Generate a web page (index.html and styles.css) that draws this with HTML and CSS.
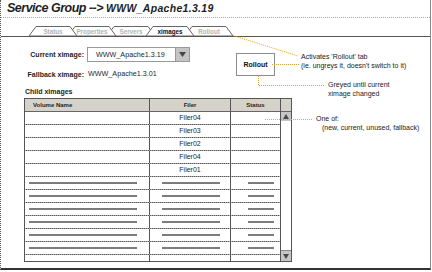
FILE: index.html
```html
<!DOCTYPE html>
<html lang="en">
<head>
  <meta charset="UTF-8" />
  <title>Service Group - ximages</title>
  <link rel="stylesheet" href="styles.css">
</head>
<body>

  <div class="frame">
    <div class="title">Service Group --&gt; <span class="title-name">WWW_Apache1.3.19</span></div>

    <div class="tabs">
      <div class="tab t1">
        <svg class="tab-shape" width="48" height="10" viewBox="0 0 48 10"><polygon points="0,10 7,0.5 41,0.5 48,10" /></svg>
        <span>Status</span>
      </div>
      <div class="tab t2">
        <svg class="tab-shape" width="48" height="10" viewBox="0 0 48 10"><polygon points="0,10 7,0.5 41,0.5 48,10" /></svg>
        <span>Properties</span>
      </div>
      <div class="tab t3">
        <svg class="tab-shape" width="48" height="10" viewBox="0 0 48 10"><polygon points="0,10 7,0.5 41,0.5 48,10" /></svg>
        <span>Servers</span>
      </div>
      <div class="tab t4 active">
        <svg class="tab-shape" width="48" height="10" viewBox="0 0 48 10"><polygon points="0,10 7,0.5 41,0.5 48,10" /></svg>
        <span>ximages</span>
      </div>
      <div class="tab t5">
        <svg class="tab-shape" width="48" height="10" viewBox="0 0 48 10"><polygon points="0,10 7,0.5 41,0.5 48,10" /></svg>
        <span>Rollout</span>
      </div>
    </div>

    <div class="top">
      <div class="fields">
        <label class="label">Current ximage:</label>
        <div class="select">
          <span class="select-value">WWW_Apache1.3.19</span>
          <span class="select-arrow"><svg width="7" height="5" viewBox="0 0 7 5"><polygon points="0,0 7,0 3.5,5" /></svg></span>
        </div>
        <label class="label">Fallback ximage:</label>
        <div class="value">WWW_Apache1.3.01</div>
      </div>
      <button class="rollout">Rollout</button>
    </div>

    <h3 class="section">Child ximages</h3>

    <div class="table">
      <div class="grid">
        <div class="row head">
          <div class="cell vol">Volume Name</div>
          <div class="cell">Filer</div>
          <div class="cell">Status</div>
        </div>
        <div class="row"><div class="cell"></div><div class="cell">Filer04</div><div class="cell"></div></div>
        <div class="row"><div class="cell"></div><div class="cell">Filer03</div><div class="cell"></div></div>
        <div class="row"><div class="cell"></div><div class="cell">Filer02</div><div class="cell"></div></div>
        <div class="row"><div class="cell"></div><div class="cell">Filer04</div><div class="cell"></div></div>
        <div class="row"><div class="cell"></div><div class="cell">Filer01</div><div class="cell"></div></div>
        <div class="row empty"><div class="cell"><i></i></div><div class="cell"><i></i></div><div class="cell"><i></i></div></div>
        <div class="row empty"><div class="cell"><i></i></div><div class="cell"><i></i></div><div class="cell"><i></i></div></div>
        <div class="row empty"><div class="cell"><i></i></div><div class="cell"><i></i></div><div class="cell"><i></i></div></div>
        <div class="row empty"><div class="cell"><i></i></div><div class="cell"><i></i></div><div class="cell"><i></i></div></div>
        <div class="row empty"><div class="cell"><i></i></div><div class="cell"><i></i></div><div class="cell"><i></i></div></div>
        <div class="row empty"><div class="cell"><i></i></div><div class="cell"><i></i></div><div class="cell"><i></i></div></div>
        <div class="row"><div class="cell"></div><div class="cell"></div><div class="cell"></div></div>
      </div>
      <div class="scroll">
        <div class="scroll-head"></div>
        <div class="scroll-btn up"><svg width="6" height="5" viewBox="0 0 6 5"><polygon points="3,0 6,5 0,5" /></svg></div>
        <div class="scroll-track"></div>
        <div class="scroll-btn down"><svg width="6" height="5" viewBox="0 0 6 5"><polygon points="0,0 6,0 3,5" /></svg></div>
      </div>
    </div>

    <!-- callouts -->
    <svg class="callouts" width="432" height="272" viewBox="0 0 432 272">
      <polygon class="head" points="218,33 225,30 225,36" />
      <polyline points="225,33 298,56" />
      <polyline points="272,64.5 299,64.5" />
      <polyline points="258.5,76 258.5,85.5 324,85.5" />
      <polyline points="265,119.5 313,119.5" />
    </svg>
    <div class="note n1">Activates 'Rollout' tab<br>(ie. ungreys it, doesn't switch to it)</div>
    <div class="note n2">Greyed until current<br>ximage changed</div>
    <div class="note n3">One of:</div>
    <div class="note n4">(new, current, unused, fallback)</div>
  </div>

</body>
</html>
```

FILE: styles.css
```css
body {
  margin: 0;
  background: #fff;
  font-family: "Liberation Sans", Arial, sans-serif;
  color: #1e1e1e;
}

.frame {
  position: relative;
  width: 429px;
  height: 268px;
  border-left: 1px dotted #555;
  border-right: 1px solid #888;
  border-bottom: 2px solid #333;
}

.title {
  height: 17px;
  line-height: 17px;
  padding-left: 6px;
  font-size: 12.5px;
  font-weight: bold;
  font-style: italic;
  letter-spacing: -0.5px;
  border-bottom: 1px dotted #aaa;
}

.title-name {
  font-size: 10.5px;
  letter-spacing: 0.3px;
}

/* tab strip */
.tabs {
  display: flex;
  align-items: flex-end;
  height: 18px;
  padding-left: 28px;
  border-bottom: 1px solid #555;
}

.tab {
  position: relative;
  width: 48px;
  height: 10px;
  margin-right: -9px;
  font-size: 6.3px;
  font-weight: bold;
  line-height: 11px;
  text-align: center;
  color: #b4b4b4;
}

.tab span {
  position: relative;
}

.tab-shape {
  position: absolute;
  left: 0;
  top: 0;
}

.tab-shape polygon {
  fill: #fff;
  stroke: #666;
  stroke-width: 1;
}

.t1 { z-index: 5; }
.t2 { z-index: 4; }
.t3 { z-index: 3; }
.t4 { z-index: 6; }
.t5 { z-index: 1; }

.tab.active {
  color: #111;
}

/* form */
.top {
  display: flex;
  align-items: flex-start;
  margin-top: 10px;
}

.fields {
  display: grid;
  grid-template-columns: 83px 103px;
  column-gap: 3px;
  row-gap: 6px;
  align-items: center;
}

.label {
  text-align: right;
  font-size: 7px;
  font-weight: bold;
}

.select {
  display: flex;
  height: 13px;
  border: 1px solid #999;
  font-size: 7.2px;
}

.select-value {
  flex: 1;
  padding-left: 8px;
  line-height: 13px;
}

.select-arrow {
  display: flex;
  align-items: center;
  justify-content: center;
  width: 13px;
  background: #c4c4c4;
  border-left: 1px solid #999;
}

.select-arrow polygon {
  fill: #444;
}

.value {
  height: 12px;
  line-height: 12px;
  padding-left: 1px;
  font-size: 7.2px;
}

.rollout {
  width: 39px;
  height: 23px;
  margin: 6px 0 0 46px;
  padding: 0;
  background: #fff;
  border: 1px solid #8c8c8c;
  font-family: inherit;
  font-size: 7px;
  font-weight: bold;
  color: #111;
}

.section {
  margin: 7px 0 1px 24px;
  height: 10px;
  line-height: 10px;
  font-size: 7px;
}

/* child ximages table */
.table {
  display: flex;
  width: 266px;
  height: 162px;
  margin-left: 23px;
  border: 1px solid #555;
  overflow: hidden;
}

.grid {
  width: 255px;
}

.row {
  display: grid;
  grid-template-columns: 124px 80px 49px;
  column-gap: 1px;
  height: 12px;
  background: #555;
  border-bottom: 1px dotted #aaa;
}

.cell {
  background: #fff;
  font-size: 7px;
  line-height: 12px;
  text-align: center;
}

.row.head {
  border-bottom: 1px solid #666;
}

.row.head .cell {
  background: #d5d2ca;
  font-size: 6px;
  font-weight: bold;
}

.row.head .vol {
  text-align: left;
  padding-left: 8px;
}

.row.empty .cell {
  display: flex;
  align-items: center;
}

.row.empty i {
  display: block;
  height: 2px;
  background: #7c7c7c;
}

.row.empty .cell:nth-child(1) i { margin: 0 12px 0 4px; flex: 1; }
.row.empty .cell:nth-child(2) i { margin: 0 10px 0 12px; flex: 1; }
.row.empty .cell:nth-child(3) i { margin: 0 6px 0 17px; flex: 1; }

.scroll {
  display: flex;
  flex-direction: column;
  width: 10px;
  border-left: 1px solid #555;
}

.scroll-head {
  height: 12px;
  background: #d5d2ca;
  border-bottom: 1px solid #666;
}

.scroll-btn {
  display: flex;
  align-items: center;
  justify-content: center;
  background: #c6c6c6;
}

.scroll-btn.up { height: 9px; }
.scroll-btn.down { height: 10px; border-top: 1px solid #888; }

.scroll-btn polygon {
  fill: #4a4a4a;
}

.scroll-track {
  flex: 1;
  background: #fff;
}

/* annotations */
.callouts {
  position: absolute;
  left: -1px;
  top: 0;
  pointer-events: none;
}

.callouts polyline {
  fill: none;
  stroke: #f0a400;
  stroke-width: 1;
  stroke-dasharray: 1 1;
}

.callouts .head {
  fill: #f0a400;
}

.note {
  position: absolute;
  font-size: 7px;
  line-height: 9px;
  color: #222;
}

.n1 { left: 300px; top: 52px; }
.n2 { left: 327px; top: 80px; }
.n3 { left: 315px; top: 114px; }
.n4 { left: 321px; top: 123px; }
```
